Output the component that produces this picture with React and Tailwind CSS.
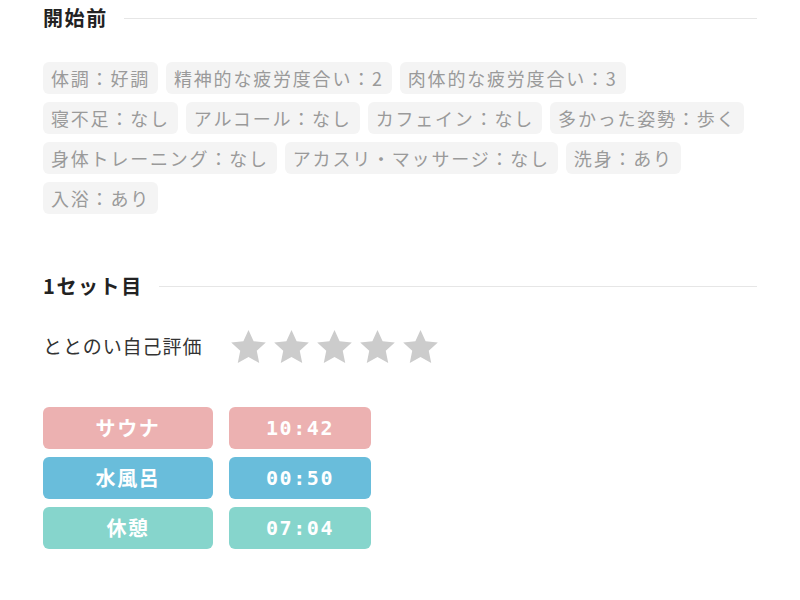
import React from "react";

const beforeTags = [
  "体調：好調",
  "精神的な疲労度合い：2",
  "肉体的な疲労度合い：3",
  "寝不足：なし",
  "アルコール：なし",
  "カフェイン：なし",
  "多かった姿勢：歩く",
  "身体トレーニング：なし",
  "アカスリ・マッサージ：なし",
  "洗身：あり",
  "入浴：あり",
];

const sets = [
  { label: "サウナ", time: "10:42", color: "bg-[#ecb1b1]" },
  { label: "水風呂", time: "00:50", color: "bg-[#69bddb]" },
  { label: "休憩", time: "07:04", color: "bg-[#86d5cc]" },
];

const Star = () => (
  <svg width="35" height="33" viewBox="1.5 1.5 21 20">
    <polygon
      fill="#cccccc"
      points="12,1.5 15.1,8.3 22.5,9.1 17,14.1 18.5,21.5 12,17.8 5.5,21.5 7,14.1 1.5,9.1 8.9,8.3"
    />
  </svg>
);

const SectionTitle = ({ children }) => (
  <div className="flex items-center gap-[16px] h-[28px]">
    <h2 className="text-[20px] font-bold text-[#222] tracking-[0.08em] leading-none">
      {children}
    </h2>
    <div className="flex-1 h-px bg-[#e6e6e6]" />
  </div>
);

export default function App() {
  return (
    <div
      className="w-[800px] h-[600px] bg-white px-[43px] pt-[4px]"
      style={{ fontFamily: '"Noto Sans CJK JP", "Noto Sans", sans-serif' }}
    >
      {/* 開始前 */}
      <SectionTitle>開始前</SectionTitle>
      <div className="flex flex-wrap gap-x-[8px] gap-y-[8px] mt-[30px]">
        {beforeTags.map((tag) => (
          <span
            key={tag}
            className="h-[32px] flex items-center px-[8px] rounded-[6px] bg-[#f4f4f4] text-[#9a9a9a] text-[18px] tracking-[0.1em] leading-none"
          >
            {tag}
          </span>
        ))}
      </div>

      {/* 1セット目 */}
      <div className="mt-[58px]">
        <SectionTitle>1セット目</SectionTitle>
      </div>

      <div className="flex items-center mt-[26px] h-[40px]">
        <span className="text-[19px] text-[#333] tracking-[0.05em]">
          ととのい自己評価
        </span>
        <div className="flex items-center gap-[8px] ml-[29px]">
          {[0, 1, 2, 3, 4].map((i) => (
            <Star key={i} />
          ))}
        </div>
      </div>

      <div className="flex flex-col gap-[8px] mt-[41px]">
        {sets.map((s) => (
          <div key={s.label} className="flex gap-[16px]">
            <div
              className={`${s.color} w-[170px] h-[42px] rounded-[6px] flex items-center justify-center text-white text-[20px] font-bold tracking-[0.08em]`}
            >
              {s.label}
            </div>
            <div
              className={`${s.color} w-[142px] h-[42px] rounded-[6px] flex items-center justify-center text-white text-[20px] font-bold tracking-[0.08em]`}
              style={{ fontFamily: '"DejaVu Sans Mono", monospace' }}
            >
              {s.time}
            </div>
          </div>
        ))}
      </div>
    </div>
  );
}
